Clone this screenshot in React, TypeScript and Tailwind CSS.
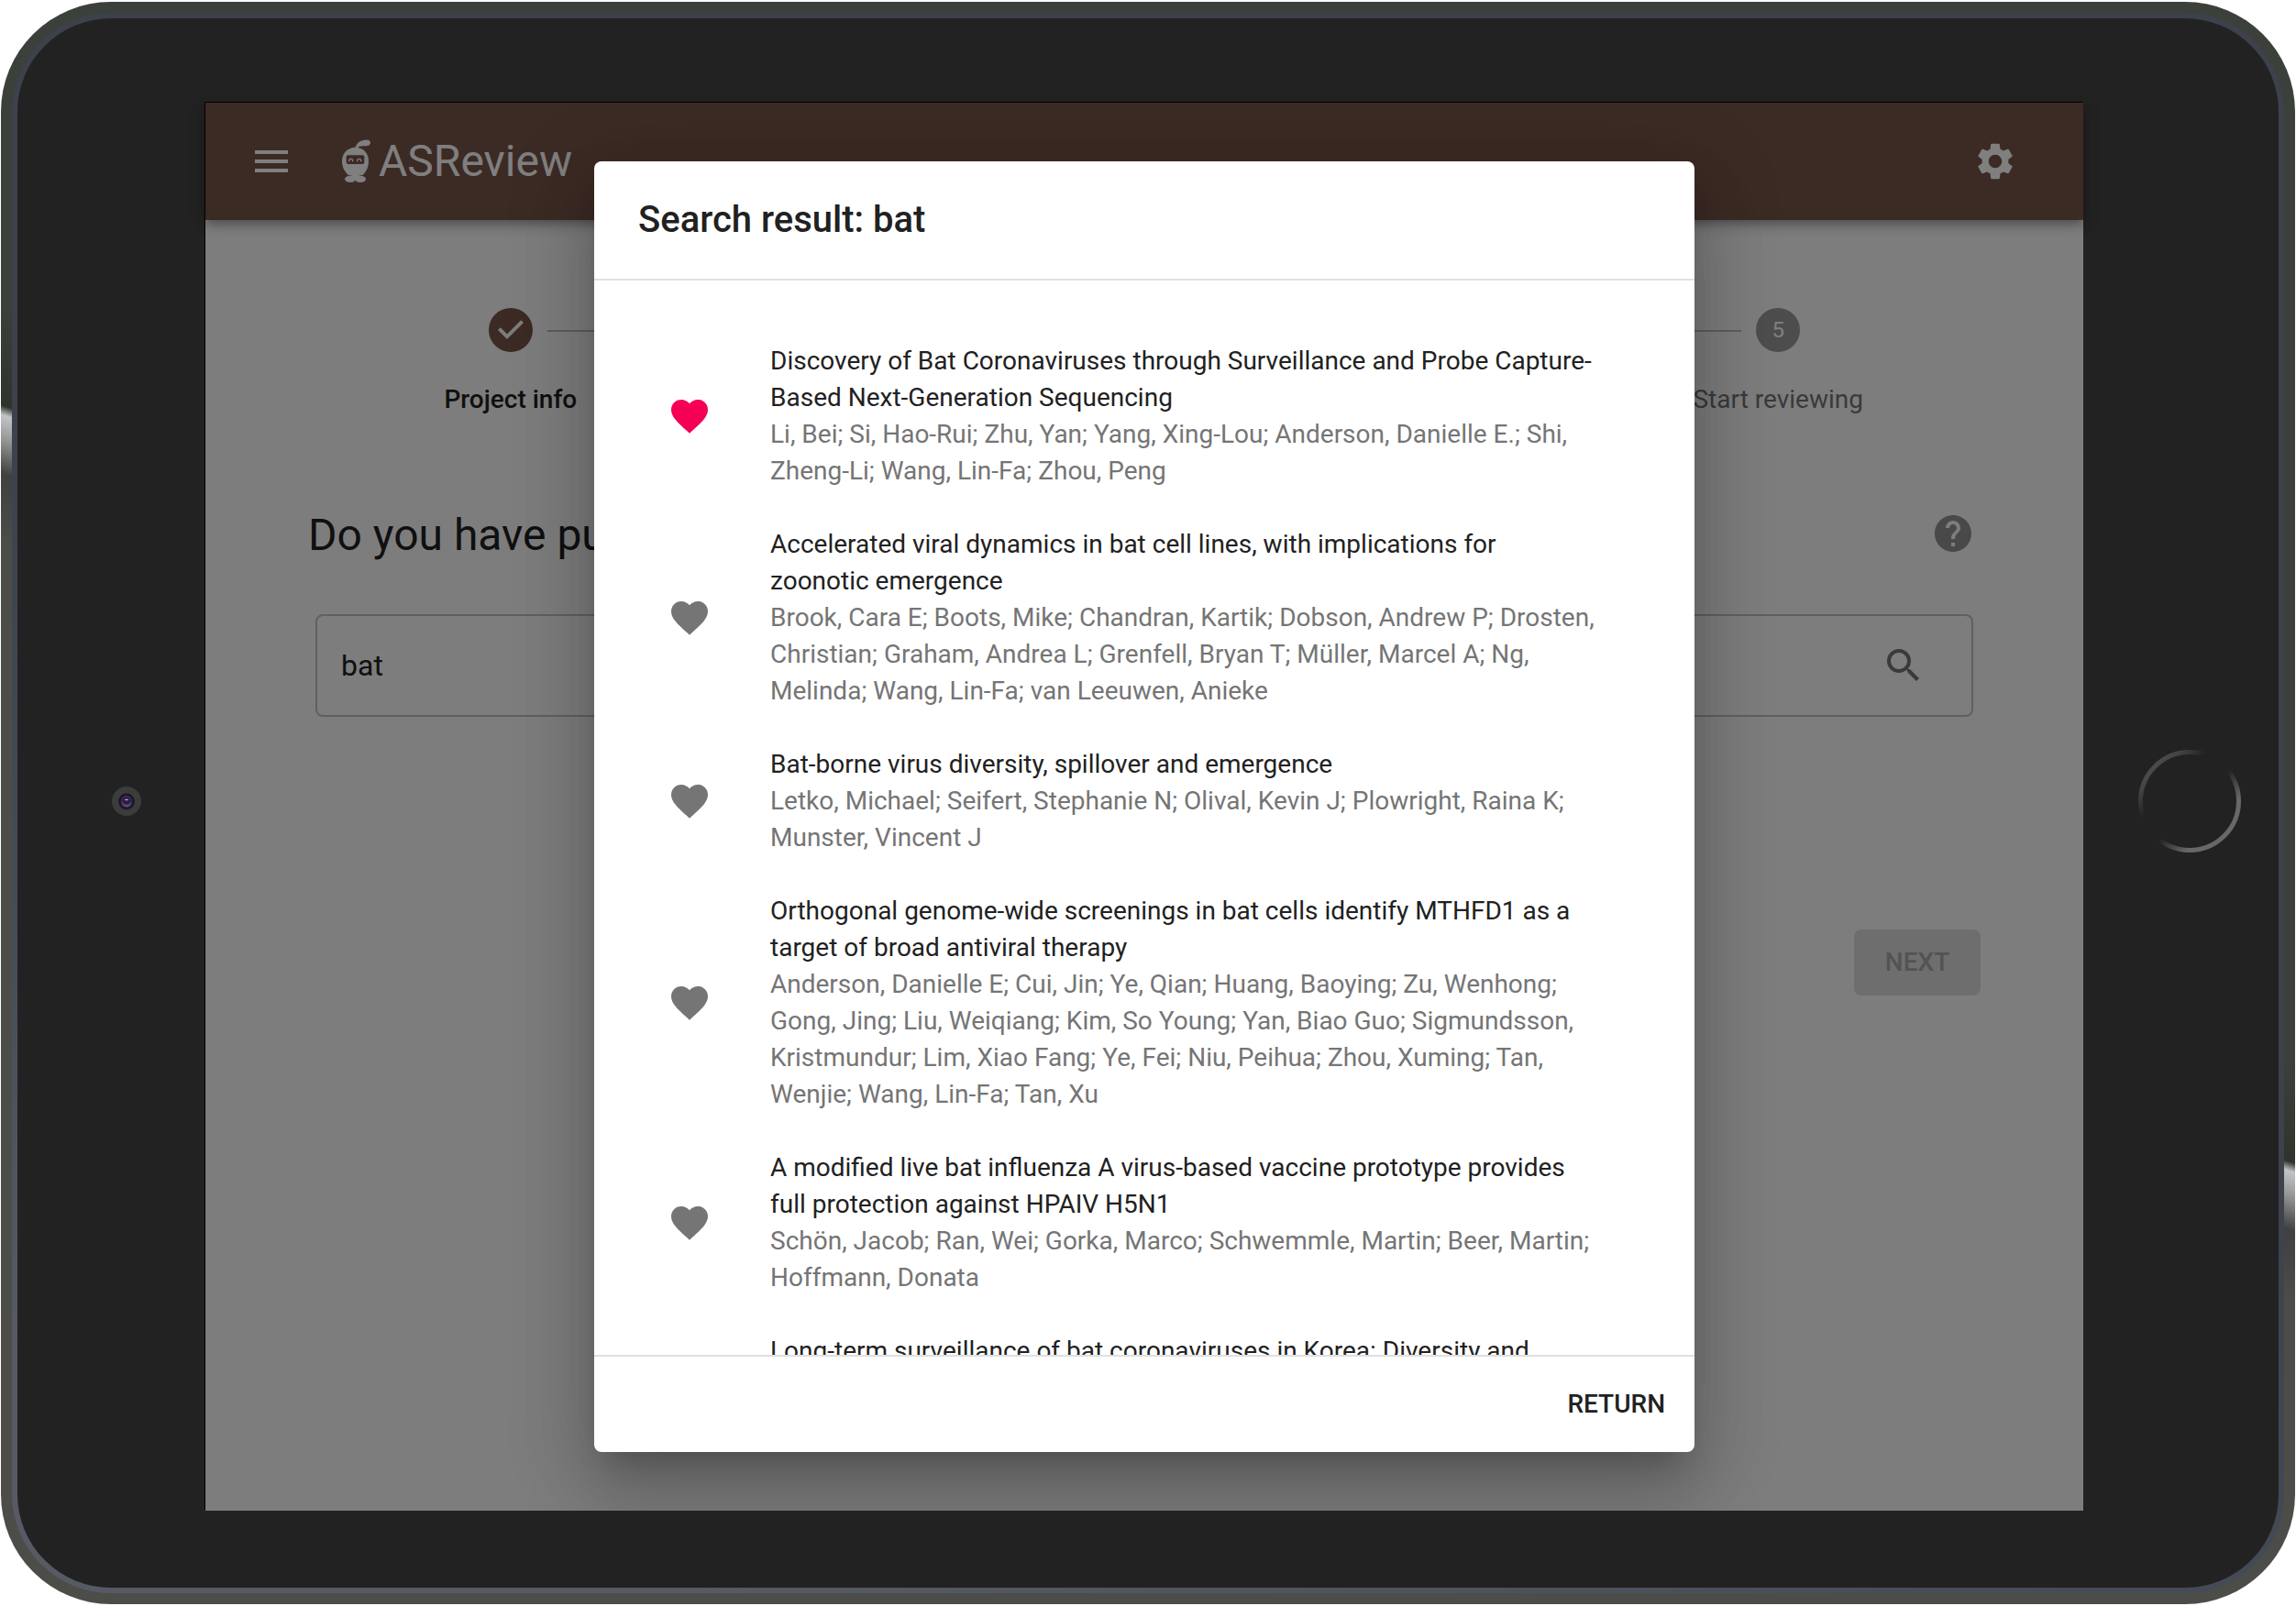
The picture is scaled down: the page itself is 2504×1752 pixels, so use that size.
import React from "react";
import { MdFavorite, MdHelp, MdMenu, MdSearch, MdSettings } from "react-icons/md";

type Paper = { title: string; authors: string; liked?: boolean };

const papers: Paper[] = [
  {
    title:
      "Discovery of Bat Coronaviruses through Surveillance and Probe Capture-Based Next-Generation Sequencing",
    authors:
      "Li, Bei; Si, Hao-Rui; Zhu, Yan; Yang, Xing-Lou; Anderson, Danielle E.; Shi, Zheng-Li; Wang, Lin-Fa; Zhou, Peng",
    liked: true,
  },
  {
    title: "Accelerated viral dynamics in bat cell lines, with implications for zoonotic emergence",
    authors:
      "Brook, Cara E; Boots, Mike; Chandran, Kartik; Dobson, Andrew P; Drosten, Christian; Graham, Andrea L; Grenfell, Bryan T; Müller, Marcel A; Ng, Melinda; Wang, Lin-Fa; van Leeuwen, Anieke",
  },
  {
    title: "Bat-borne virus diversity, spillover and emergence",
    authors:
      "Letko, Michael; Seifert, Stephanie N; Olival, Kevin J; Plowright, Raina K; Munster, Vincent J",
  },
  {
    title:
      "Orthogonal genome-wide screenings in bat cells identify MTHFD1 as a target of broad antiviral therapy",
    authors:
      "Anderson, Danielle E; Cui, Jin; Ye, Qian; Huang, Baoying; Zu, Wenhong; Gong, Jing; Liu, Weiqiang; Kim, So Young; Yan, Biao Guo; Sigmundsson, Kristmundur; Lim, Xiao Fang; Ye, Fei; Niu, Peihua; Zhou, Xuming; Tan, Wenjie; Wang, Lin-Fa; Tan, Xu",
  },
  {
    title:
      "A modified live bat influenza A virus-based vaccine prototype provides full protection against HPAIV H5N1",
    authors:
      "Schön, Jacob; Ran, Wei; Gorka, Marco; Schwemmle, Martin; Beer, Martin; Hoffmann, Donata",
  },
  {
    title: "Long-term surveillance of bat coronaviruses in Korea: Diversity and distribution pattern",
    authors: "Lo, Van Thi; Yoon, Sun-Woo; Noh, Ji Yeong; Kim, Youngji; Choi, Yong Gun; Jeong, Dae Gwin; Kim, Hye Kwon",
  },
];

const steps = ["Project info", "Dataset", "Prior knowledge", "Model", "Start reviewing"];

function Mascot() {
  return (
    <svg viewBox="21 21 99 144" className="h-12 w-[33px]" fill="white" aria-hidden="true">
      <path d="M67 50C70 36 80 24 100 23C112 22 118 26 117 34C116 41 108 44 98 43C88 42 78 43 72 51Z" />
      <path d="M68 47C93 47 111 66 111 92C111 112 103 128 90 139H46C33 128 24 112 24 92C24 66 43 47 68 47Z" />
      <ellipse cx="51" cy="151" rx="18" ry="11" />
      <ellipse cx="84" cy="151" rx="18" ry="11" />
      <rect x="55" y="132" width="26" height="18" />
      <rect x="38" y="73" width="59" height="29" rx="6" fill="#795548" />
      <path
        d="M47 94V91a6 6 0 0 1 12 0V94M74 94V91a6 6 0 0 1 12 0V94"
        fill="none"
        stroke="white"
        strokeWidth="4"
      />
    </svg>
  );
}

function CheckCircle() {
  return (
    <svg viewBox="0 0 24 24" className="size-12 text-[#795548]" fill="currentColor" aria-hidden="true">
      <path d="M12 0a12 12 0 1 0 0 24 12 12 0 0 0 0-24zm-2 17l-5-5 1.4-1.4 3.6 3.6 7.6-7.6L19 8l-9 9z" />
    </svg>
  );
}

function Camera() {
  return (
    <svg viewBox="0 0 32 32" className="size-8" aria-hidden="true">
      <defs>
        <linearGradient id="lens" x1="0" y1="0" x2="0" y2="1">
          <stop offset="0" stopColor="#3a2260" />
          <stop offset="0.5" stopColor="#35214f" />
          <stop offset="1" stopColor="#66569a" />
        </linearGradient>
      </defs>
      <circle cx="16" cy="16" r="16" fill="#3c3c3c" />
      <circle cx="16" cy="17" r="9" fill="#2b2b2e" />
      <circle cx="16" cy="16" r="8.5" fill="#17161d" />
      <circle cx="16" cy="16" r="6.5" fill="url(#lens)" />
      <circle cx="16" cy="16" r="3.5" fill="#2b1b40" />
      <ellipse cx="16" cy="14.5" rx="2" ry="0.8" fill="#b9b4c4" />
    </svg>
  );
}

function HomeButton() {
  return (
    <svg viewBox="0 0 112 112" className="size-28" fill="none" aria-hidden="true">
      <defs>
        <linearGradient id="ring" x1="0.1" y1="0.1" x2="0.9" y2="0.9">
          <stop offset="0" stopColor="#505050" />
          <stop offset="0.12" stopColor="#444444" />
          <stop offset="0.3" stopColor="#222222" />
          <stop offset="0.55" stopColor="#222222" />
          <stop offset="0.8" stopColor="#686868" />
          <stop offset="1" stopColor="#686868" />
        </linearGradient>
      </defs>
      <circle cx="56" cy="56" r="53.5" stroke="url(#ring)" strokeWidth="5" />
    </svg>
  );
}

function Stepper() {
  return (
    <ol className="mx-12 grid grid-cols-5">
      {steps.map((label, i) => (
        <li key={label} className="relative flex flex-col items-center gap-8">
          {i > 0 && (
            <span className="absolute top-6 right-[calc(50%+40px)] left-[calc(-50%+40px)] h-0.5 bg-[#bdbdbd]" />
          )}
          {i === 0 ? (
            <CheckCircle />
          ) : (
            <span className="flex size-12 items-center justify-center rounded-full bg-[#9b9b9b] text-2xl text-white">
              {i + 1}
            </span>
          )}
          <span
            className={
              i === 0
                ? "text-[28px] leading-10 font-medium whitespace-nowrap text-[#212121]"
                : "text-[28px] leading-10 whitespace-nowrap text-[#757575]"
            }
          >
            {label}
          </span>
        </li>
      ))}
    </ol>
  );
}

function ReviewApp() {
  return (
    <div className="flex h-full flex-col bg-[#fafafa] text-[#212121]">
      <header className="z-10 flex h-32 shrink-0 items-center bg-[#795548] pr-[72px] pl-12 text-white shadow-[0_4px_8px_-2px_rgba(0,0,0,0.2),0_8px_10px_0_rgba(0,0,0,0.14),0_2px_20px_0_rgba(0,0,0,0.12)]">
        <button type="button" aria-label="Menu">
          <MdMenu className="size-12" />
        </button>
        <a href="#home" className="ml-[52px] flex items-center gap-2">
          <Mascot />
          <span className="text-5xl">ASReview</span>
        </a>
        <button type="button" aria-label="Settings" className="ml-auto">
          <MdSettings className="size-12" />
        </button>
      </header>
      <main className="px-28 pt-24">
        <Stepper />
        <div className="mt-24 flex items-center justify-between pr-1.5">
          <h1 className="text-5xl leading-[64px]">Do you have publications?</h1>
          <button type="button" aria-label="Help" className="pb-1 text-[#929292]">
            <MdHelp className="size-12" />
          </button>
        </div>
        <form className="mx-2 mt-[54px] flex h-28 items-center rounded-lg border-2 border-[#c0c0c0] pr-[50px] pl-[26px]">
          <input
            type="text"
            aria-label="Search"
            defaultValue="bat"
            className="min-w-0 flex-1 bg-transparent text-[32px] outline-none"
          />
          <button type="button" aria-label="Search" className="text-[#757575]">
            <MdSearch className="size-12" />
          </button>
        </form>
        <div className="mt-[232px] flex justify-end">
          <button
            type="button"
            disabled
            className="h-[72px] min-w-[138px] rounded-lg bg-[#dcdcdc] px-8 text-[28px] font-medium text-[#a6a6a6]"
          >
            NEXT
          </button>
        </div>
      </main>
    </div>
  );
}

function SearchDialog() {
  return (
    <section
      role="dialog"
      aria-labelledby="dialog-title"
      className="flex h-full w-full max-w-[1200px] flex-col rounded-lg bg-white text-[#212121] shadow-[0_22px_30px_-14px_rgba(0,0,0,0.2),0_48px_76px_6px_rgba(0,0,0,0.14),0_18px_92px_16px_rgba(0,0,0,0.12)]"
    >
      <h2 id="dialog-title" className="px-12 py-8 text-[40px] leading-[64px] font-medium">
        Search result: bat
      </h2>
      <ul className="min-h-0 flex-1 overflow-y-auto border-y-2 border-[#e0e0e0] py-12 pr-[104px] pl-20 [scrollbar-width:none]">
        {papers.map((paper) => (
          <li key={paper.title} className="flex items-center gap-16 py-5">
            <button
              type="button"
              aria-label={"Mark as relevant: " + paper.title}
              className={paper.liked ? "shrink-0 text-[#f50057]" : "shrink-0 text-[#757575]"}
            >
              <MdFavorite className="size-12" />
            </button>
            <div className="text-[28px] leading-10">
              <h3>{paper.title}</h3>
              <p className="text-[#757575]">{paper.authors}</p>
            </div>
          </li>
        ))}
      </ul>
      <div className="flex justify-end p-4">
        <button type="button" className="h-[72px] px-4 text-[28px] font-medium">
          RETURN
        </button>
      </div>
    </section>
  );
}

export default function App() {
  return (
    <div className="h-screen bg-white px-px py-0.5 font-[Roboto,sans-serif]">
      <div className="h-full rounded-[120px] bg-[linear-gradient(198.3deg,#3b403b_0%,#3b403b_45%,#2e332b_49.2%,#c3c4c8_49.6%,#969896_50.6%,#3f4040_52.1%,#4c4d49_55%,#4c4d49_100%)] p-3">
        <div className="h-full rounded-[108px] bg-[linear-gradient(198.3deg,#3c414b_0%,#3c414b_50%,#454c57_70%,#575a64_90%)] p-1.5">
          <div className="grid h-full grid-cols-[205px_minmax(0,1fr)_213px] rounded-[102px] bg-[#222222] pt-[92px] pb-[84px]">
            <div className="flex items-center justify-center pb-3 pl-[33px]">
              <Camera />
            </div>
            <div className="relative min-h-0 shadow-[-1px_-1px_0_0_black]">
              <ReviewApp />
              <div className="absolute inset-0 z-20 flex justify-center overflow-hidden bg-black/50 py-16">
                <SearchDialog />
              </div>
            </div>
            <div className="flex items-center justify-center pb-3 pl-[19px]">
              <HomeButton />
            </div>
          </div>
        </div>
      </div>
    </div>
  );
}
